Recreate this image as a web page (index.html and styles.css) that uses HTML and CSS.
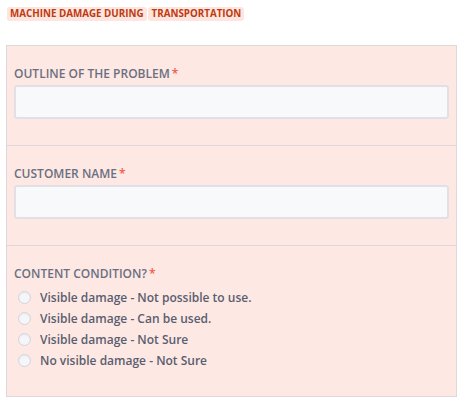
FILE: index.html
```html
<!DOCTYPE html>
<html>
<head>
<meta charset="utf-8">
<link rel="stylesheet" href="styles.css">
</head>
<body>
<h1 class="title"><span class="hl">MACHINE DAMAGE DURING</span><span class="hl hl-second">TRANSPORTATION</span></h1>
<div class="panel">
  <div class="section">
    <label class="label">OUTLINE OF THE PROBLEM<span class="req">*</span></label>
    <div class="input"></div>
  </div>
  <div class="section">
    <label class="label">CUSTOMER NAME<span class="req">*</span></label>
    <div class="input"></div>
  </div>
  <div class="section last">
    <label class="label">CONTENT CONDITION?<span class="req">*</span></label>
    <ul class="options">
      <li class="option"><span class="radio"></span>Visible damage - Not possible to use.</li>
      <li class="option"><span class="radio"></span>Visible damage - Can be used.</li>
      <li class="option"><span class="radio"></span>Visible damage - Not Sure</li>
      <li class="option"><span class="radio"></span>No visible damage - Not Sure</li>
    </ul>
  </div>
</div>
</body>
</html>
```
FILE: styles.css
```css
* { box-sizing: border-box; }
body {
  margin: 0;
  padding: 7px 8px 0 6px;
  font-family: "Open Sans", "Liberation Sans", sans-serif;
  background: #fff;
}
.title {
  margin: 0 0 0 1px;
  font-size: 9.8px;
  font-weight: 700;
  color: #bf3a10;
  line-height: 14px;
  height: 14px;
  display: flex;
  gap: 1px;
}
.hl {
  background: #fde6df;
  border-radius: 3px;
  padding: 0 3px;
  white-space: pre;
}
.hl-second {
  padding-left: 4px;
}
.panel {
  margin-top: 24px;
  width: 451px;
  background: #fde8e4;
  border: 1px solid #dcd8dc;
}
.section {
  height: 100px;
  padding: 20px 7px 0 7px;
  border-bottom: 1px solid #dcd8dc;
}
.section.last {
  height: 150px;
  border-bottom: none;
}
.label {
  display: block;
  font-size: 12px;
  line-height: 16px;
  color: #6b6f80;
  font-weight: 600;
  height: 16px;
}
.req {
  color: #ef5b4a;
  margin-left: 2px;
}
.input {
  margin-top: 3px;
  height: 34px;
  background: #f8f9fb;
  border: 2px solid #e2e0e6;
  border-radius: 3px;
}
.options {
  list-style: none;
  margin: 5px 0 0 0;
  padding: 0;
}
.option {
  display: flex;
  align-items: center;
  height: 21px;
  font-size: 12px;
  font-weight: 600;
  color: #5a5e6f;
}
.radio {
  flex: none;
  width: 13px;
  height: 13px;
  border-radius: 50%;
  background: #f5f6f9;
  border: 1px solid #d3d4db;
  box-shadow: inset 0 1px 2px rgba(0,0,0,0.06);
  margin: 0 9px 0 4px;
}
```
